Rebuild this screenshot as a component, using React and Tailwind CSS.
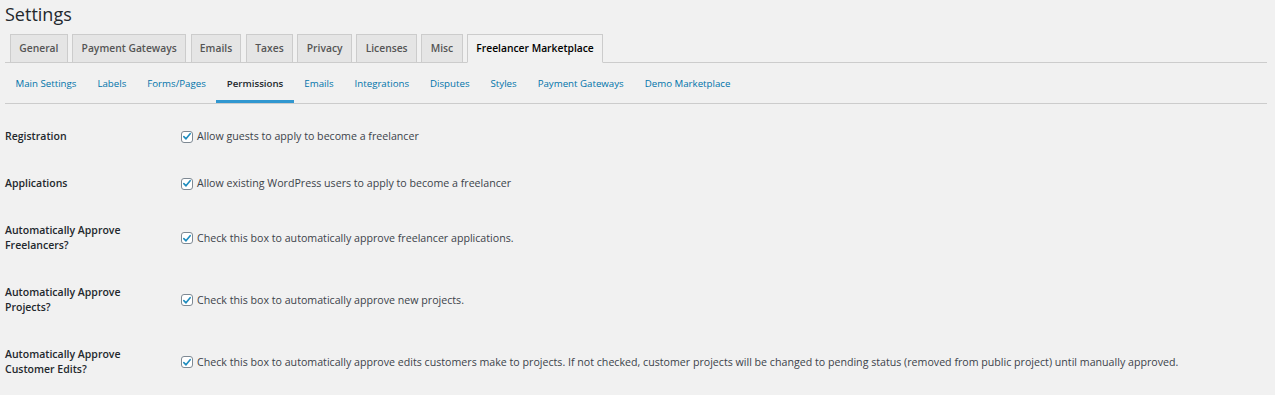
import React, { useState } from "react";

const mainTabs = [
  "General",
  "Payment Gateways",
  "Emails",
  "Taxes",
  "Privacy",
  "Licenses",
  "Misc",
  "Freelancer Marketplace",
];

const subTabs = [
  "Main Settings",
  "Labels",
  "Forms/Pages",
  "Permissions",
  "Emails",
  "Integrations",
  "Disputes",
  "Styles",
  "Payment Gateways",
  "Demo Marketplace",
];

const rows = [
  { label: ["Registration"], text: "Allow guests to apply to become a freelancer" },
  { label: ["Applications"], text: "Allow existing WordPress users to apply to become a freelancer" },
  {
    label: ["Automatically Approve", "Freelancers?"],
    text: "Check this box to automatically approve freelancer applications.",
  },
  {
    label: ["Automatically Approve", "Projects?"],
    text: "Check this box to automatically approve new projects.",
  },
  {
    label: ["Automatically Approve", "Customer Edits?"],
    text: "Check this box to automatically approve edits customers make to projects. If not checked, customer projects will be changed to pending status (removed from public project) until manually approved.",
  },
];

function Checkbox({ checked, onChange }) {
  return (
    <button
      type="button"
      onClick={onChange}
      className="w-[12px] h-[12px] shrink-0 rounded-[3px] border border-[#7e8993] bg-white flex items-center justify-center"
    >
      {checked && (
        <svg viewBox="0 0 12 12" className="w-[11px] h-[11px]">
          <path d="M2.2 6.2 L4.8 8.8 L9.8 2.6" fill="none" stroke="#1e8cbe" strokeWidth="1.9" strokeLinecap="round" strokeLinejoin="round" />
        </svg>
      )}
    </button>
  );
}

export default function App() {
  const [checks, setChecks] = useState(rows.map(() => true));

  return (
    <div className="min-h-screen bg-[#f1f1f1] pl-[5px] pr-[8px] font-['Open_Sans','Noto_Sans',sans-serif] text-[#23282d]">
      <h1 className="text-[18px] leading-[28px] font-normal text-[#23282d]">Settings</h1>

      {/* main tabs */}
      <div className="mt-[6px] flex border-b border-[#ccc] pl-[5px] gap-[4.5px]">
        {mainTabs.map((t) => {
          const active = t === "Freelancer Marketplace";
          return (
            <div
              key={t}
              className={`-mb-px h-[29px] px-[8.3px] flex items-center border text-[10.3px] font-semibold ${
                active
                  ? "bg-[#f1f1f1] border-[#ccc] border-b-[#f1f1f1] text-black"
                  : "bg-[#e5e5e5] border-[#ccc] text-[#555]"
              }`}
            >
              {t}
            </div>
          );
        })}
      </div>

      {/* sub tabs */}
      <div className="flex border-b border-[#ccc]">
        {subTabs.map((t) => {
          const active = t === "Permissions";
          return (
            <div
              key={t}
              className={`h-[40px] pt-[5px] px-[10.5px] flex items-center border-b-[3px] text-[9.7px] ${
                active ? "border-[#3197d0] text-[#23282d] font-semibold" : "border-transparent text-[#0073aa]"
              }`}
            >
              {t}
            </div>
          );
        })}
      </div>

      {/* permission rows */}
      <div className="pt-[9px]">
        {rows.map((r, i) => (
          <div key={i} className="flex items-center py-[16px]">
            <div className="w-[176px] shrink-0 text-[10.5px] leading-[15px] font-semibold text-[#23282d]">
              {r.label.map((l) => (
                <div key={l}>{l}</div>
              ))}
            </div>
            <label className="flex items-center gap-[4px] text-[10.65px] leading-[15px] text-[#3c434a]">
              <Checkbox
                checked={checks[i]}
                onChange={() => setChecks(checks.map((c, j) => (j === i ? !c : c)))}
              />
              <span>{r.text}</span>
            </label>
          </div>
        ))}
      </div>
    </div>
  );
}
